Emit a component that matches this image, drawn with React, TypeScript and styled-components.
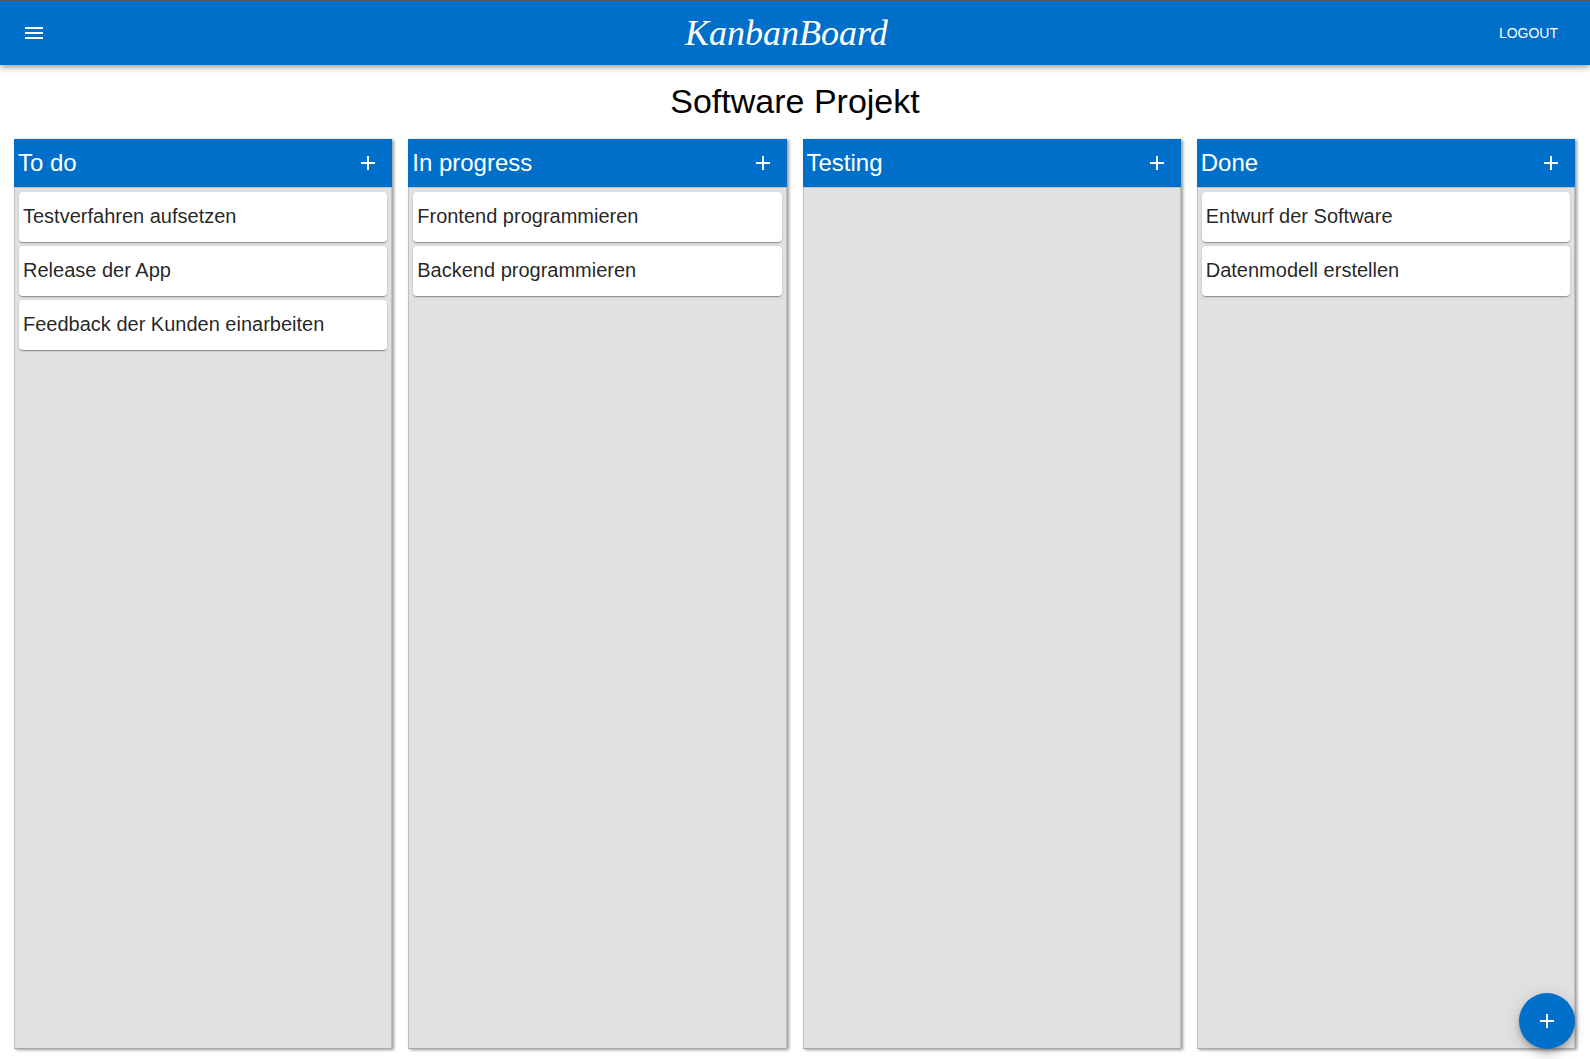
import React from "react";
import styled, { createGlobalStyle } from "styled-components";

const BLUE = "#006fc9";

const GlobalStyle = createGlobalStyle`
  *, *::before, *::after { box-sizing: border-box; }
  body {
    margin: 0;
    background: #fff;
    font-family: "Liberation Sans", Arial, Helvetica, sans-serif;
  }
  h1, h2, p, ul { margin: 0; padding: 0; font-weight: 400; }
`;

const Page = styled.div`
  display: flex;
  flex-direction: column;
  min-height: 100vh;
`;

const AppBar = styled.header`
  display: flex;
  align-items: center;
  height: 65px;
  padding: 0 24px 0 10px;
  border-top: 1px solid #555;
  background: ${BLUE};
  color: #fff;
  box-shadow: 0 2px 4px -1px rgba(0, 0, 0, 0.2), 0 4px 5px rgba(0, 0, 0, 0.14),
    0 1px 10px rgba(0, 0, 0, 0.12);
`;

const IconButton = styled.button`
  display: inline-flex;
  align-items: center;
  justify-content: center;
  width: 48px;
  height: 48px;
  padding: 12px;
  border: 0;
  border-radius: 50%;
  background: transparent;
  color: inherit;
  cursor: pointer;
`;

const Icon = styled.svg`
  display: block;
  width: 24px;
  height: 24px;
  fill: currentColor;
`;

const Brand = styled.p`
  flex: 1;
  padding-left: 24px;
  text-align: center;
  font-family: "Apple Chancery", "Liberation Serif", "Times New Roman", serif;
  font-style: italic;
  font-size: 36px;
  line-height: 48px;
`;

const TextButton = styled.button`
  padding: 6px 8px;
  border: 0;
  background: transparent;
  color: inherit;
  font: inherit;
  font-size: 14px;
  line-height: 24px;
  text-transform: uppercase;
  cursor: pointer;
`;

const Title = styled.h1`
  padding: 15px 16px 17px;
  text-align: center;
  font-size: 34px;
  line-height: 42px;
  color: #000;
`;

const Board = styled.main`
  flex: 1;
  display: grid;
  grid-template-columns: repeat(4, 1fr);
  gap: 16px;
  padding: 0 15px 10px 14px;
`;

const Column = styled.section`
  display: flex;
  flex-direction: column;
  background: #e1e1e1;
  box-shadow: 2px 1px 3px rgba(0, 0, 0, 0.4);
`;

const ColumnHeader = styled.div`
  display: flex;
  align-items: center;
  justify-content: space-between;
  padding-left: 4px;
  background: ${BLUE};
  color: #fff;
`;

const ColumnTitle = styled.h2`
  font-size: 24px;
  line-height: 32px;
`;

const CardList = styled.ul`
  flex: 1;
  display: flex;
  flex-direction: column;
  gap: 4px;
  padding: 4px;
  border: 1px solid #c0c0c0;
  border-bottom-color: #a8a8a8;
  list-style: none;
`;

const Card = styled.li`
  padding: 8px 4px 10px;
  border-radius: 4px;
  background: #fff;
  color: rgba(0, 0, 0, 0.87);
  font-size: 20px;
  line-height: 32px;
  box-shadow: 0 2px 1px -1px rgba(0, 0, 0, 0.2), 0 1px 1px rgba(0, 0, 0, 0.14),
    0 1px 3px rgba(0, 0, 0, 0.12);
`;

const Fab = styled.button`
  position: fixed;
  right: 15px;
  bottom: 10px;
  display: flex;
  align-items: center;
  justify-content: center;
  width: 56px;
  height: 56px;
  border: 0;
  border-radius: 50%;
  background: ${BLUE};
  color: #fff;
  cursor: pointer;
  box-shadow: 0 3px 5px -1px rgba(0, 0, 0, 0.2), 0 6px 10px rgba(0, 0, 0, 0.14),
    0 1px 18px rgba(0, 0, 0, 0.12);
`;

const AddIcon = () => (
  <Icon viewBox="0 0 24 24" aria-hidden="true">
    <path d="M19 13h-6v6h-2v-6H5v-2h6V5h2v6h6v2z" />
  </Icon>
);

const MenuIcon = () => (
  <Icon viewBox="0 0 24 24" aria-hidden="true">
    <path d="M3 18h18v-2H3v2zm0-5h18v-2H3v2zm0-7v2h18V6H3z" />
  </Icon>
);

const columns: { title: string; cards: string[] }[] = [
  {
    title: "To do",
    cards: ["Testverfahren aufsetzen", "Release der App", "Feedback der Kunden einarbeiten"],
  },
  { title: "In progress", cards: ["Frontend programmieren", "Backend programmieren"] },
  { title: "Testing", cards: [] },
  { title: "Done", cards: ["Entwurf der Software", "Datenmodell erstellen"] },
];

export default function App() {
  return (
    <Page>
      <GlobalStyle />
      <AppBar>
        <IconButton type="button" aria-label="Menu">
          <MenuIcon />
        </IconButton>
        <Brand>KanbanBoard</Brand>
        <TextButton type="button">Logout</TextButton>
      </AppBar>
      <Title>Software Projekt</Title>
      <Board>
        {columns.map((column) => (
          <Column key={column.title}>
            <ColumnHeader>
              <ColumnTitle>{column.title}</ColumnTitle>
              <IconButton type="button" aria-label={`Add card to ${column.title}`}>
                <AddIcon />
              </IconButton>
            </ColumnHeader>
            <CardList>
              {column.cards.map((card) => (
                <Card key={card}>{card}</Card>
              ))}
            </CardList>
          </Column>
        ))}
      </Board>
      <Fab type="button" aria-label="Add column">
        <AddIcon />
      </Fab>
    </Page>
  );
}
